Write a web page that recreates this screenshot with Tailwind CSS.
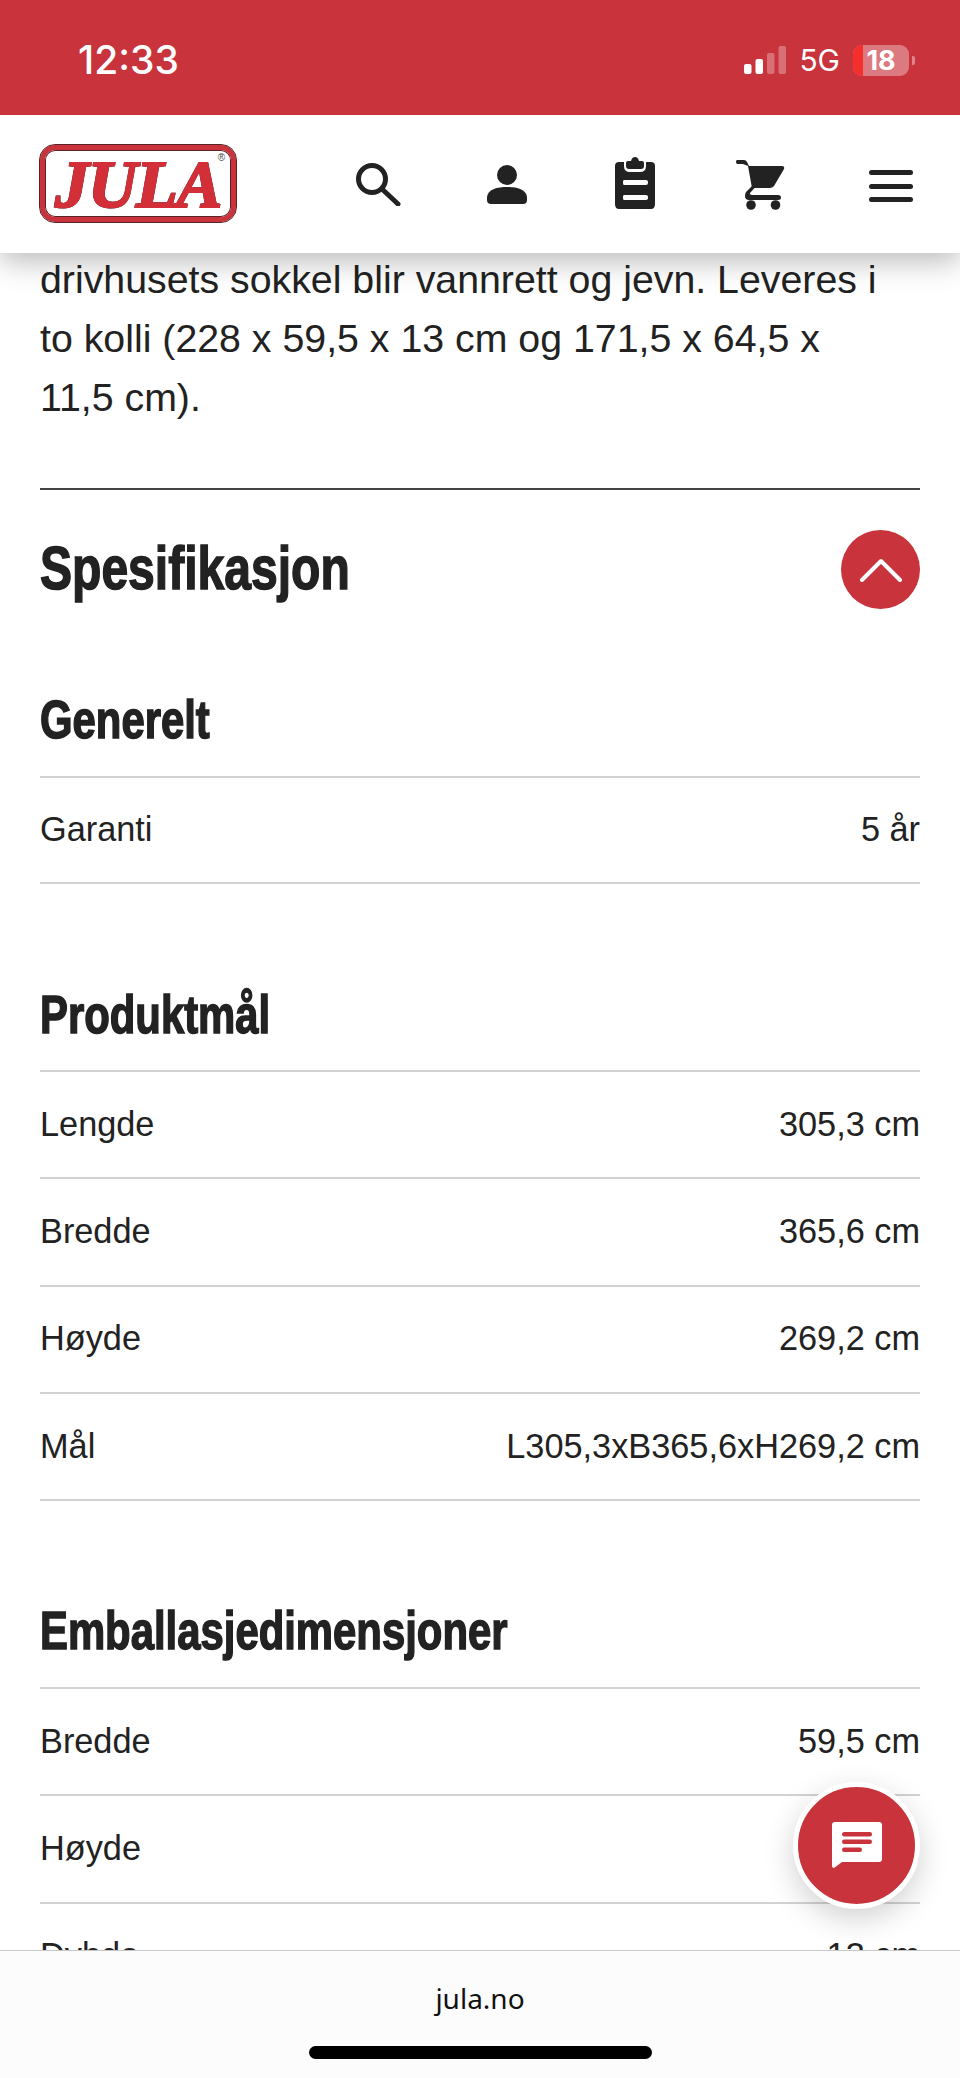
<!DOCTYPE html>
<html lang="en">
<head>
  <meta charset="UTF-8" />
  <title>Jula</title>
  <script src="https://cdn.jsdelivr.net/npm/@tailwindcss/browser@4"></script>
</head>
<body class="bg-white font-['Liberation_Sans',sans-serif] text-[#222]">
<div class="relative w-[960px] h-[2078px] overflow-hidden">

  <!-- Status bar -->
  <div class="relative z-30 h-[115px] bg-[#c8333c] flex items-center justify-between pt-[5px] pl-[78px] pr-[45px] text-white">
    <span class="font-['Inter',sans-serif] font-medium text-[39px]">12:33</span>
    <div class="flex items-center">
      <svg width="42" height="28" viewBox="0 0 42 28" fill="#fff">
        <rect x="0" y="18" width="7.5" height="10" rx="2"/>
        <rect x="11.5" y="13" width="7.5" height="15" rx="2"/>
        <rect x="23" y="7" width="7.5" height="21" rx="2" opacity=".3"/>
        <rect x="34.5" y="0" width="7.5" height="28" rx="2" opacity=".3"/>
      </svg>
      <span class="ml-[13px] font-['Inter',sans-serif] text-[30px]">5G</span>
      <div class="ml-[13px] relative w-[56px] h-[31px] rounded-[9px] bg-white/35 overflow-hidden flex items-center justify-center">
        <div class="absolute left-0 top-0 bottom-0 w-[10px] bg-[#f5302c]"></div>
        <span class="relative font-['Inter',sans-serif] font-bold text-[27px] leading-none">18</span>
      </div>
      <div class="ml-[3px] w-[3px] h-[9px] rounded-r-[2px] bg-white/40"></div>
    </div>
  </div>

  <!-- Header -->
  <header class="relative z-20 h-[138px] bg-white shadow-[0_8px_28px_rgba(0,0,0,0.28)] flex items-center pl-[40px]">
    <div class="relative w-[196px] h-[77px] mt-[-1px] rounded-[15px] border-[5px] border-[#c8333c] outline outline-1 outline-[#5a2226] shadow-[inset_0_0_0_1px_#5a2226] flex items-center justify-center">
      <span class="font-['Liberation_Serif',serif] font-bold italic text-[68px] leading-[46px] tracking-[-1px] text-[#d32f38] [-webkit-text-stroke:2px_#d32f38] [filter:drop-shadow(0_0_0.7px_#222)]">JULA</span>
      <span class="absolute right-[6px] top-[3px] text-[10px] leading-none text-[#444]">®</span>
    </div>
    <svg class="absolute left-[355px] top-[45px]" width="46" height="46" viewBox="0 0 46 46" fill="none" stroke="#222" stroke-width="5" stroke-linecap="round">
      <circle cx="17" cy="19" r="13.5"/>
      <path d="M27 29 L43 44"/>
    </svg>
    <svg class="absolute left-[487px] top-[50px]" width="40" height="40" viewBox="0 0 40 40" fill="#222">
      <circle cx="20" cy="10" r="10"/>
      <path d="M0 33 C0 24 11 22 20 22 C29 22 40 24 40 33 L40 35 Q40 39 36 39 L4 39 Q0 39 0 35 Z"/>
    </svg>
    <svg class="absolute left-[615px] top-[42px]" width="40" height="52" viewBox="0 0 40 52" fill="#222">
      <path fill-rule="evenodd" d="M4 5 H9 V9 Q9 15 15 15 H25 Q31 15 31 9 V5 H36 Q40 5 40 9 V47 Q40 52 36 52 H4 Q0 52 0 47 V9 Q0 5 4 5 Z M9 23 Q8 23 8 25 V26 Q8 28 9 28 H31 Q33 28 33 26 V25 Q33 23 31 23 Z M9 38 Q8 38 8 40 V41 Q8 43 9 43 H31 Q33 43 33 41 V40 Q33 38 31 38 Z"/>
      <path d="M13 4 H16 Q17 0 20 0 Q23 0 24 4 H27 Q29 4 29 6 V9 Q29 12 26 12 H14 Q11 12 11 9 V6 Q11 4 13 4 Z"/>
    </svg>
    <svg class="absolute left-[736px] top-[45px]" width="49" height="50" viewBox="0 0 49 50" fill="#222">
      <path d="M1 0 H8 Q10 0 11 2 L13 6 H46 Q49 6 48 9 L38 26 Q36 28 34 28 H16 L12 6 L7 4 H1 Q0 3 0 2 Q0 0 1 0 Z"/>
      <path d="M16 26 L18.5 28 L14 33 Q13.5 35 16 35 H42 Q45 35 45 37.5 Q45 40 42 40 H13 Q9 40 9 36 Q9 34 10 32 Z"/>
      <circle cx="15" cy="45" r="4.8"/>
      <circle cx="39.5" cy="45" r="4.8"/>
    </svg>
    <div class="absolute left-[869px] top-[55px] w-[44px] flex flex-col gap-[8.5px]">
      <div class="h-[5px] rounded-full bg-[#222]"></div>
      <div class="h-[5px] rounded-full bg-[#222]"></div>
      <div class="h-[5px] rounded-full bg-[#222]"></div>
    </div>
  </header>

  <!-- Content -->
  <main class="px-[40px]">
    <p class="mt-[-3px] text-[39.3px] leading-[59px] pb-[61px] border-b-2 border-[#444]">
      drivhusets sokkel blir vannrett og jevn. Leveres i<br>to kolli (228 x 59,5 x 13 cm og 171,5 x 64,5 x<br>11,5 cm).
    </p>

    <div class="flex items-center justify-between pt-[40px]">
      <h2 class="pb-[3px] font-bold text-[62px] leading-[76px] origin-left scale-x-[.775] whitespace-nowrap [-webkit-text-stroke:1.5px_#222]">Spesifikasjon</h2>
      <div class="w-[79px] h-[79px] rounded-full bg-[#c8333c] flex items-center justify-center">
        <svg width="42" height="24" viewBox="0 0 42 24" fill="none" stroke="#fff" stroke-width="4" stroke-linecap="round" stroke-linejoin="round"><path d="M2 22 L21 3 L40 22"/></svg>
      </div>
    </div>

    <!-- Generelt -->
    <div class="pt-[80px] pb-[27px] border-b-[2.5px] border-[#d2d2d2]">
      <h3 class="font-bold text-[54px] leading-[60px] origin-left scale-x-[.775] whitespace-nowrap [-webkit-text-stroke:1.5px_#222]">Generelt</h3>
    </div>
    <div class="h-[106px] flex items-center justify-between text-[34.3px] border-b-[2.5px] border-[#d2d2d2]"><span>Garanti</span><span>5 år</span></div>

    <!-- Produktmål -->
    <div class="pt-[100px] pb-[26px] border-b-[2.5px] border-[#d2d2d2]">
      <h3 class="font-bold text-[54px] leading-[60px] origin-left scale-x-[.775] whitespace-nowrap [-webkit-text-stroke:1.5px_#222]">Produktmål</h3>
    </div>
    <div class="h-[107.25px] flex items-center justify-between text-[34.3px] border-b-[2.5px] border-[#d2d2d2]"><span>Lengde</span><span>305,3 cm</span></div>
    <div class="h-[107.25px] flex items-center justify-between text-[34.3px] border-b-[2.5px] border-[#d2d2d2]"><span>Bredde</span><span>365,6 cm</span></div>
    <div class="h-[107.25px] flex items-center justify-between text-[34.3px] border-b-[2.5px] border-[#d2d2d2]"><span>Høyde</span><span>269,2 cm</span></div>
    <div class="h-[107.25px] flex items-center justify-between text-[34.3px] border-b-[2.5px] border-[#d2d2d2]"><span>Mål</span><span>L305,3xB365,6xH269,2 cm</span></div>

    <!-- Emballasjedimensjoner -->
    <div class="pt-[99px] pb-[27px] border-b-[2.5px] border-[#d2d2d2]">
      <h3 class="font-bold text-[54px] leading-[60px] origin-left scale-x-[.775] whitespace-nowrap [-webkit-text-stroke:1.5px_#222]">Emballasjedimensjoner</h3>
    </div>
    <div class="h-[107.25px] flex items-center justify-between text-[34.3px] border-b-[2.5px] border-[#d2d2d2]"><span>Bredde</span><span>59,5 cm</span></div>
    <div class="h-[107.25px] flex items-center justify-between text-[34.3px] border-b-[2.5px] border-[#d2d2d2]"><span>Høyde</span><span>13 cm</span></div>
    <div class="h-[107.25px] flex items-center justify-between text-[34.3px] border-b-[2.5px] border-[#d2d2d2]"><span>Dybde</span><span>13 cm</span></div>
  </main>

  <!-- Chat button -->
  <div class="absolute left-[793px] top-[1782px] w-[127px] h-[127px] rounded-full bg-[#c8333c] border-[5px] border-white shadow-[0_10px_30px_rgba(0,0,0,0.18)] flex items-center justify-center">
    <svg class="mt-[-1px]" width="50" height="46" viewBox="0 0 50 46" fill="#fff">
      <path d="M3 0 H47 Q50 0 50 3 V37 Q50 40 47 40 H10 L2 46 Q0 46 0 44 V3 Q0 0 3 0 Z"/>
      <g fill="#c8333c">
        <rect x="10" y="10" width="30" height="4.5" rx="2.2"/>
        <rect x="10" y="17.5" width="30" height="4.5" rx="2.2"/>
        <rect x="10" y="25.5" width="20" height="4.5" rx="2.2"/>
      </g>
    </svg>
  </div>

  <!-- Browser bar -->
  <div class="absolute left-0 right-0 bottom-0 h-[128px] bg-[#fcfcfc] border-t border-[#c8c8c8]">
    <div class="text-center text-[28px] leading-[34px] mt-[30px] font-['Noto_Sans',sans-serif] text-[#111]">jula.no</div>
    <div class="absolute left-[309px] top-[95px] w-[343px] h-[13px] rounded-full bg-black"></div>
  </div>
</div>
</body>
</html>
